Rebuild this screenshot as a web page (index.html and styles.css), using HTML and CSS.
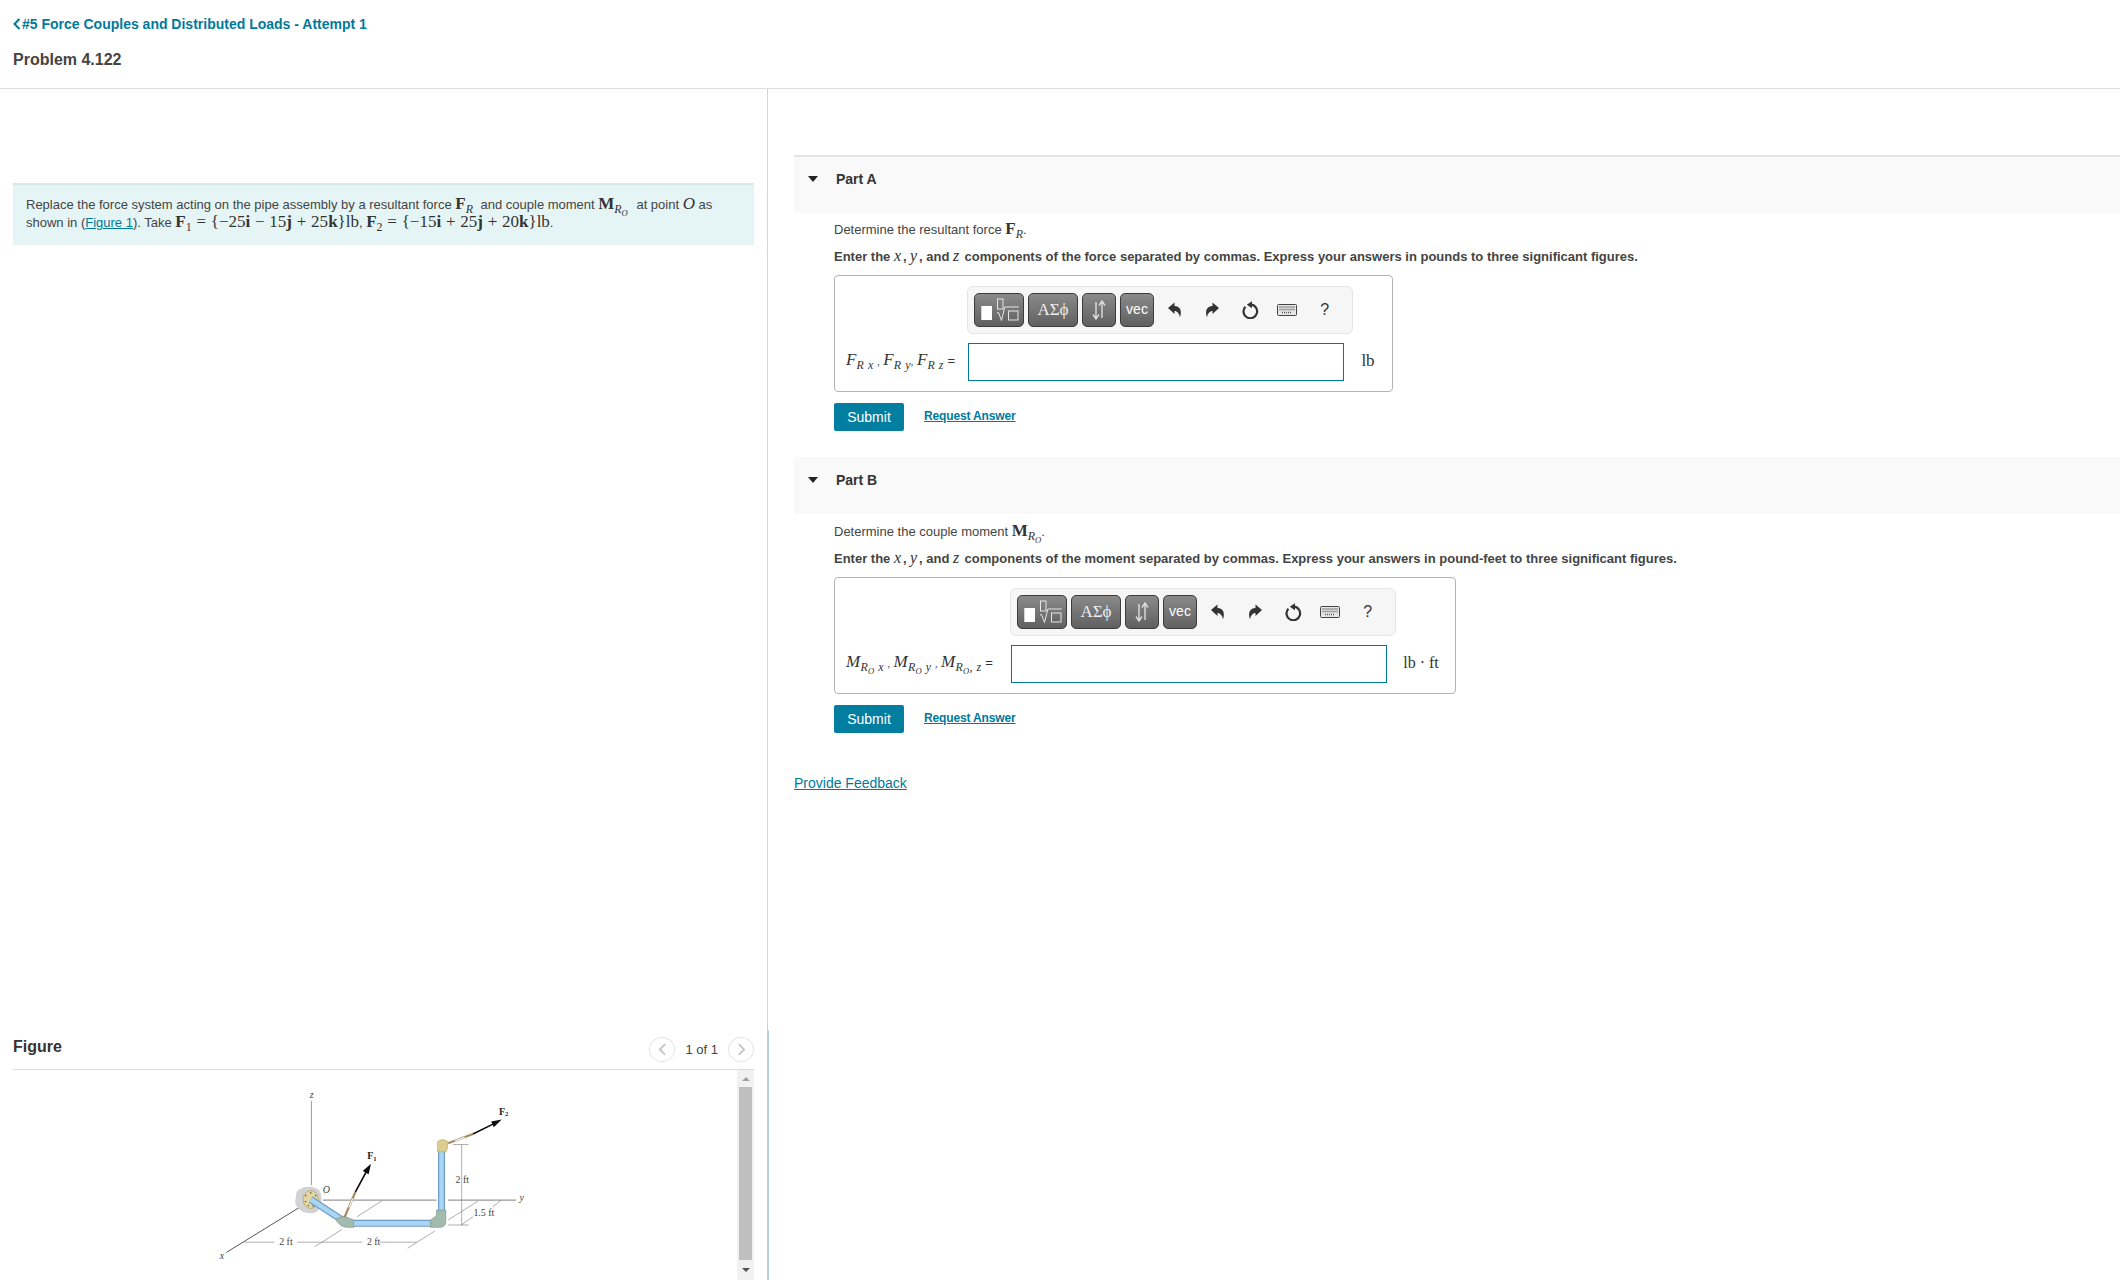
FILE: index.html
```html
<!DOCTYPE html>
<html lang="en">
<head>
<meta charset="utf-8">
<title>Problem 4.122</title>
<link rel="stylesheet" href="styles.css">
</head>
<body>
<header class="top">
  <a class="crumb" href="#"><svg class="crumb-icon" viewBox="0 0 8 12"><path d="M6.500 1 1.500 6l5 5" /></svg>#5 Force Couples and Distributed Loads - Attempt 1</a>
  <h1 class="title">Problem 4.122</h1>
</header>
<main class="split">
  <section class="left">
    <div class="left-top">
      <div class="stem">Replace the force system acting on the pipe assembly by a resultant force <span class="m gap-r"><b>F</b><sub class="i">R</sub></span> and couple moment <span class="m gap-m"><b>M</b><sub class="i">R<sub class="i">O</sub></sub></span> at point <span class="m i">O</span> as shown in (<a href="#">Figure 1</a>). Take <span class="m"><b>F</b><sub>1</sub> = {−25<b>i</b> − 15<b>j</b> + 25<b>k</b>}lb</span>, <span class="m"><b>F</b><sub>2</sub> = {−15<b>i</b> + 25<b>j</b> + 20<b>k</b>}lb</span>.</div>
    </div>
    <div class="figure">
      <div class="figure-head">
        <h2 class="figure-title">Figure</h2>
        <div class="pager">
          <span class="page-btn"><svg viewBox="0 0 10 14"><path d="M8 1 2 7l6 6"/></svg></span>
          <span class="page-text">1 of 1</span>
          <span class="page-btn"><svg viewBox="0 0 10 14"><path d="m2 1 6 6-6 6"/></svg></span>
        </div>
      </div>
      <div class="figure-body">
        <svg class="diagram" viewBox="0 0 1148 634">
          <defs>
            <filter id="soft"><feGaussianBlur stdDeviation="0.9"/></filter>
          </defs>
          <g filter="url(#soft)">
            <path class="ax" d="M397 90V345"/>
            <path class="ax dark" d="M140 548 372 405"/>
            <path class="ax thick" d="M432 390H775M810 390H1015"/>
            <path class="dim" d="M535 440 610 392M408 530 490 478M688 535 770 483M810 450 900 393M850 465 885 440M945 410 970 390M825 222H872M810 465H872M851 222V465M195 517H285M355 517H550M605 517H715"/>
            <path class="blob" d="M352 365C370 345 405 345 422 362 432 385 430 415 408 428 380 435 350 420 348 395Z"/>
            <ellipse class="flange" cx="395" cy="388" rx="23" ry="27"/>
            <path class="bolt" d="M395 368v.1M410 376v.1M413 394v.1M403 408v.1M388 406v.1M379 394v.1M380 376v.1"/>
            <path class="pipe-edge" d="M395 388 490 450"/>
            <path class="pipe-core" d="M395 388 490 450"/>
            <path class="pipe-edge" d="M515 460H765"/>
            <path class="pipe-core" d="M515 460H765"/>
            <path class="pipe-edge" d="M790 430V240"/>
            <path class="pipe-core" d="M790 430V240"/>
            <path class="elbow" d="M470 447 495 438 525 450V472H505C490 472 478 462 470 447Z"/>
            <path class="elbow" d="M757 450 775 436V420H803V455C803 466 795 472 785 472H757Z"/>
            <path class="cap" d="M778 214C782 206 800 206 808 212V232L804 244H778Z"/>
            <path class="rod" d="M497 442 530 365"/>
            <path class="rod" d="M810 218 885 190"/>
            <path class="rod-mid" d="M510 412 522 385M830 211 860 200"/>
            <path class="force" d="M530 365 565 300M885 190 950 158"/>
            <path class="head" d="M577 280 570 312 552 302ZM972 146 948 170 940 152Z"/>
          </g>
          <text class="lbl it" x="398" y="82">z</text>
          <text class="lbl it" x="127" y="568">x</text>
          <text class="lbl it" x="1032" y="394">y</text>
          <text class="lbl it" x="442" y="368">O</text>
          <text class="lbl bd" x="580" y="266">F<tspan class="sm" dy="5">1</tspan></text>
          <text class="lbl bd" x="978" y="132">F<tspan class="sm" dy="5">2</tspan></text>
          <text class="lbl" x="320" y="526">2 ft</text>
          <text class="lbl" x="585" y="526">2 ft</text>
          <text class="lbl" x="853" y="338">2 ft</text>
          <text class="lbl" x="918" y="438">1.5 ft</text>
        </svg>
        <div class="scrollbar">
          <span class="arrow up"></span>
          <span class="thumb"></span>
          <span class="arrow down"></span>
        </div>
      </div>
    </div>
  </section>
  <section class="right">
    <article class="part">
      <div class="part-head first"><span class="caret"></span><span class="part-name">Part A</span></div>
      <div class="part-body">
        <p class="ask">Determine the resultant force <span class="m"><b>F</b><sub class="i">R</sub></span>.</p>
        <p class="instr">Enter the <span class="m i norm">x</span>, <span class="m i norm">y</span>, and <span class="m i norm">z</span> components of the force separated by commas. Express your answers in pounds to three significant figures.</p>
        <div class="answer answer-a">
          <div class="toolbar">
            <span class="tb-btn tb-tpl"><svg viewBox="0 0 46 30"><rect class="w" x="5.300" y="11" width="10.700" height="14"/><rect class="o" x="21.500" y="4" width="5.500" height="10"/><path class="o" d="M21 18l1.500-.5 3 8 3.300-13.500h14"/><rect class="o" x="32.500" y="16" width="9.500" height="9"/></svg></span>
            <span class="tb-btn tb-sym">ΑΣϕ</span>
            <span class="tb-btn tb-arr"><svg viewBox="0 0 18 22"><path d="M6 3V19M3 15.500 6 20l3-4.500M12 19V3M9 6.500 12 2l3 4.500"/></svg></span>
            <span class="tb-btn tb-vec">vec</span>
            <span class="tb-ico"><svg viewBox="0 0 16 16"><path d="M1 6 7.500 .5V4C12.500 4 15.500 8 13 15.500 12.500 11.500 10 9 7.500 9V12Z"/></svg></span>
            <span class="tb-ico"><svg viewBox="0 0 16 16"><path d="M15 6 8.500 .5V4C3.500 4 .5 8 3 15.500 3.500 11.500 6 9 8.500 9V12Z"/></svg></span>
            <span class="tb-ico"><svg class="reset" viewBox="0 0 18 18"><path class="arc" d="M9.500 3.700A6.800 6.800 0 1 1 4.400 5.800"/><path d="M11 .2V7.200L5.800 3.700Z"/></svg></span>
            <span class="tb-ico"><svg class="kbd" viewBox="0 0 20 12"><rect class="kb-o" x=".5" y=".5" width="19" height="11" rx="1"/><path class="kb-k" d="M2.500 3h15M2.500 5.500h15M5 8.500h10"/></svg></span>
            <span class="tb-ico tb-help">?</span>
          </div>
          <div class="a-label"><span class="m i">F<sub>R x</sub></span> <small>,</small> <span class="m i">F<sub>R y</sub></span><small>,</small> <span class="m i">F<sub>R z</sub></span> =</div>
          <div class="a-input"></div>
          <div class="a-unit m">lb</div>
        </div>
        <div class="actions"><a class="submit" href="#">Submit</a><a class="req" href="#">Request Answer</a></div>
      </div>
    </article>
    <article class="part">
      <div class="part-head"><span class="caret"></span><span class="part-name">Part B</span></div>
      <div class="part-body">
        <p class="ask">Determine the couple moment <span class="m"><b>M</b><sub class="i">R<sub class="i">O</sub></sub></span>.</p>
        <p class="instr">Enter the <span class="m i norm">x</span>, <span class="m i norm">y</span>, and <span class="m i norm">z</span> components of the moment separated by commas. Express your answers in pound-feet to three significant figures.</p>
        <div class="answer answer-b">
          <div class="toolbar">
            <span class="tb-btn tb-tpl"><svg viewBox="0 0 46 30"><rect class="w" x="5.300" y="11" width="10.700" height="14"/><rect class="o" x="21.500" y="4" width="5.500" height="10"/><path class="o" d="M21 18l1.500-.5 3 8 3.300-13.500h14"/><rect class="o" x="32.500" y="16" width="9.500" height="9"/></svg></span>
            <span class="tb-btn tb-sym">ΑΣϕ</span>
            <span class="tb-btn tb-arr"><svg viewBox="0 0 18 22"><path d="M6 3V19M3 15.500 6 20l3-4.500M12 19V3M9 6.500 12 2l3 4.500"/></svg></span>
            <span class="tb-btn tb-vec">vec</span>
            <span class="tb-ico"><svg viewBox="0 0 16 16"><path d="M1 6 7.500 .5V4C12.500 4 15.500 8 13 15.500 12.500 11.500 10 9 7.500 9V12Z"/></svg></span>
            <span class="tb-ico"><svg viewBox="0 0 16 16"><path d="M15 6 8.500 .5V4C3.500 4 .5 8 3 15.500 3.500 11.500 6 9 8.500 9V12Z"/></svg></span>
            <span class="tb-ico"><svg class="reset" viewBox="0 0 18 18"><path class="arc" d="M9.500 3.700A6.800 6.800 0 1 1 4.400 5.800"/><path d="M11 .2V7.200L5.800 3.700Z"/></svg></span>
            <span class="tb-ico"><svg class="kbd" viewBox="0 0 20 12"><rect class="kb-o" x=".5" y=".5" width="19" height="11" rx="1"/><path class="kb-k" d="M2.500 3h15M2.500 5.500h15M5 8.500h10"/></svg></span>
            <span class="tb-ico tb-help">?</span>
          </div>
          <div class="a-label"><span class="m i">M<sub>R<sub>O</sub> x</sub></span> <small>,</small> <span class="m i">M<sub>R<sub>O</sub> y</sub></span> <small>,</small> <span class="m i">M<sub>R<sub>O</sub>, z</sub></span> =</div>
          <div class="a-input"></div>
          <div class="a-unit m unit-wide">lb · ft</div>
        </div>
        <div class="actions"><a class="submit" href="#">Submit</a><a class="req" href="#">Request Answer</a></div>
      </div>
    </article>
    <a class="feedback" href="#">Provide Feedback</a>
  </section>
</main>
</body>
</html>
```
FILE: styles.css
```css
* { box-sizing: border-box; }
html, body { margin: 0; height: 1280px; overflow: hidden; background: #fff; }
body { font-family: "Liberation Sans", Arial, sans-serif; color: #333; font-size: 13px; }
a { color: #007a9c; }

.top { height: 89px; border-bottom: 1px solid #ddd; padding: 16px 13px 0; }
.crumb { display: flex; align-items: center; height: 16px; font-size: 14px; font-weight: bold; text-decoration: none; }
.crumb-icon { width: 8px; height: 12px; margin-right: 1px; fill: none; stroke: #007a9c; stroke-width: 2; }
.title { margin: 16px 0 0; font-size: 16px; line-height: 24px; font-weight: bold; color: #444; }

.split { display: flex; height: 1191px; }
.left { width: 769px; flex: none; display: flex; flex-direction: column; }
.left-top { height: 941px; padding: 94px 13px 0; border-right: 1px solid #d4d4d4; margin-right: 1px; }
.stem { height: 62px; padding: 11px 13px 0; background: #e5f5f5; border-top: 2px solid #d9e6e6; line-height: 18px; font-size: 13px; color: #444; }
.stem a { color: #007a9c; }
.gap-r { margin-right: 4px; }
.gap-m { margin-right: 5px; }

.m { font-family: "Liberation Serif", "Times New Roman", serif; font-size: 17px; line-height: 0; color: #333; word-spacing: .5px; }
.m.norm { font-size: 16px; font-weight: normal; letter-spacing: 1.8px; }
.i { font-style: italic; }
.m sub { font-size: 70%; line-height: 0; vertical-align: -0.3em; }
.m sub sub { font-size: 72%; }

.figure { flex: 1; border-right: 2px solid #b9cfe2; padding: 0 13px 0 13px; min-height: 0; display: flex; flex-direction: column; }
.figure-head { height: 40px; display: flex; align-items: center; justify-content: space-between; border-bottom: 1px solid #ddd; flex: none; }
.figure-title { margin: 0 0 6px; font-size: 16px; font-weight: bold; color: #333; }
.pager { display: flex; align-items: center; gap: 10px; margin-bottom: 0; }
.page-btn { width: 26px; height: 25px; border: 1px solid #e4e4e4; border-radius: 50%; display: flex; align-items: center; justify-content: center; }
.page-btn svg { width: 9px; height: 13px; fill: none; stroke: #c4c4c4; stroke-width: 2; }
.page-text { font-size: 13px; color: #444; }
.figure-body { flex: 1; display: flex; justify-content: space-between; min-height: 0; }
.diagram { width: 380px; height: 210px; margin: 1px 0 0 167px; flex: none; }
.scrollbar { width: 17px; height: 100%; background: #f1f1f1; display: flex; flex-direction: column; align-items: center; }
.arrow { width: 0; height: 0; border-left: 4px solid transparent; border-right: 4px solid transparent; flex: none; }
.arrow.up { border-bottom: 4px solid #a3a3a3; margin: 7px 0 6px; }
.arrow.down { border-top: 4px solid #505050; margin-top: 8px; }
.thumb { width: 13px; height: 173px; background: #bfbfbf; flex: none; }

.ax { fill: none; stroke: #666; stroke-width: 2; }
.ax.dark { stroke: #333; stroke-width: 2.5; }
.ax.thick { stroke: #999; stroke-width: 4; }
.dim { fill: none; stroke: #777; stroke-width: 1.8; }
.blob { fill: #d2d2d2; }
.flange { fill: #e3d6a0; stroke: #a89b6c; stroke-width: 2; }
.bolt { fill: none; stroke: #6a6250; stroke-width: 5; stroke-linecap: round; }
.pipe-edge { fill: none; stroke: #6c9cc4; stroke-width: 21; }
.pipe-core { fill: none; stroke: #a8d6f2; stroke-width: 14; }
.elbow { fill: #a3bbae; stroke: #7d9688; stroke-width: 2; }
.cap { fill: #dccd90; stroke: #bdac6e; stroke-width: 2; }
.rod { fill: none; stroke: #a68a60; stroke-width: 7; }
.rod-mid { fill: none; stroke: #eee; stroke-width: 4; }
.force { fill: none; stroke: #111; stroke-width: 5; }
.head { fill: #111; }
.lbl { font-family: "Liberation Serif", serif; font-size: 30px; fill: #444; text-anchor: middle; }
.lbl.it { font-style: italic; }
.lbl.bd { font-weight: bold; fill: #222; }
.sm { font-size: 20px; }

.right { flex: 1; min-width: 0; padding: 66px 0 0 25px; }
.part-head { height: 57px; background: #f9f9f9; display: flex; align-items: flex-start; padding: 15px 0 0 14px; }
.part-head.first { height: 58px; border-top: 2px solid #e5e5e5; padding-top: 14px; }
.caret { width: 0; height: 0; border-left: 5px solid transparent; border-right: 5px solid transparent; border-top: 6px solid #222; margin: 5px 18px 0 0; }
.part-name { font-size: 14px; font-weight: bold; line-height: 16px; color: #333; }
.part-body { padding: 1px 0 26px 40px; }
.part-head.first + .part-body { padding-top: 0; }
.ask { margin: 8px 0 0; height: 18px; line-height: 18px; font-size: 13px; color: #444; }
.instr { margin: 9px 0 0; height: 18px; line-height: 18px; font-size: 13px; font-weight: bold; color: #444; }
.answer { display: grid; width: fit-content; margin-top: 9px; padding: 10px 0 10px 11px; border: 1px solid #b3b3b3; border-radius: 4px; row-gap: 9px; }
.answer-a { grid-template-columns: 122px 376px 48px; }
.answer-b { grid-template-columns: 165px 376px 68px; }
.toolbar { grid-column: 2 / 4; margin-left: -1px; width: 386px; height: 48px; background: #f6f6f6; border: 1px solid #e4e4e4; border-radius: 6px; padding: 6px; display: flex; align-items: flex-start; }
.tb-btn { height: 34px; display: flex; align-items: center; justify-content: center; background: linear-gradient(#8a8a8a, #606060); border: 1px solid #3c3c3c; border-radius: 5px; color: #fff; margin-right: 4px; flex: none; }
.tb-tpl { width: 50px; }
.tb-tpl svg { width: 46px; height: 30px; }
.tb-tpl .w { fill: #fff; }
.tb-tpl .o { fill: none; stroke: #e6e6e6; stroke-width: 1; }
.tb-sym { width: 50px; font-family: "Liberation Serif", serif; font-size: 17px; color: #eee; }
.tb-arr { width: 34px; }
.tb-arr svg { width: 18px; height: 22px; fill: none; stroke: #ddd; stroke-width: 1.4; }
.tb-vec { width: 34px; font-size: 14px; margin-right: 2px; padding-bottom: 2px; }
.tb-ico { width: 37.5px; height: 34px; display: flex; align-items: center; justify-content: center; flex: none; }
.tb-ico svg { width: 16px; height: 16px; fill: #333; }
.tb-ico .reset { width: 18px; height: 18px; }
.reset .arc { fill: none; stroke: #333; stroke-width: 2.2; }
.tb-ico .kbd { width: 20px; height: 12px; }
.kb-o { fill: #e6e6e6; stroke: #444; stroke-width: 1; }
.kb-k { fill: none; stroke: #555; stroke-width: 1.4; stroke-dasharray: 1 1; }
.tb-help { font-size: 16px; color: #333; }
.a-label { align-self: center; white-space: nowrap; font-size: 13px; margin-top: -3px; }
.a-label .m { letter-spacing: .2px; }
.a-label sub { letter-spacing: .3px; }
.a-label small { font-size: 10px; font-family: "Liberation Serif", serif; }
.a-input { height: 38px; border: 1px solid #007a9c; background: #fff; }
.a-unit { align-self: center; text-align: center; font-size: 17px; line-height: 20px; white-space: nowrap; margin-top: -2px; word-spacing: 0; }
.unit-wide { font-size: 16px; }
.actions { display: flex; align-items: center; margin-top: 11px; }
.submit { width: 70px; height: 28px; background: #027ea1; color: #fff; border-radius: 2px; text-decoration: none; text-align: center; line-height: 28px; font-size: 14px; }
.req { margin-left: 20px; font-size: 12px; font-weight: bold; letter-spacing: -.15px; padding-bottom: 2px; }
.feedback { display: block; margin-top: 16px; font-size: 14px; width: fit-content; }
```
